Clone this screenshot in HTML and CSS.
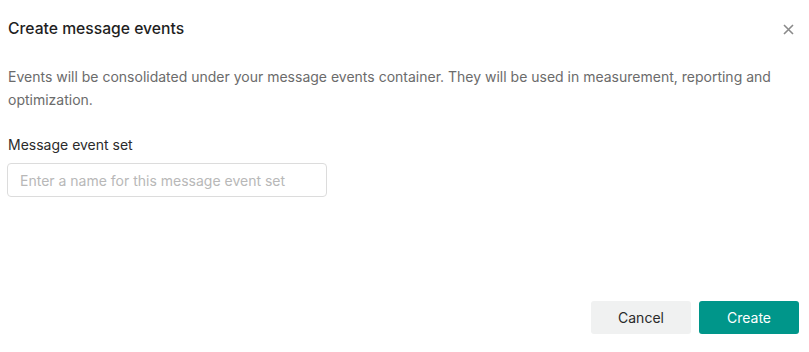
FILE: index.html
```html
<!DOCTYPE html>
<html>

<head>
    <meta charset="utf-8">
    <title>Create message events</title>
    <link rel="stylesheet" href="styles.css">
</head>

<body>
    <div class="dialog">
        <div class="dialog-header">
            <h2 class="dialog-title">Create message events</h2>
            <button class="close-btn" type="button" aria-label="Close">
                <svg width="11" height="11" viewBox="0 0 11 11">
                    <path d="M1 1 L10 10 M10 1 L1 10" stroke="#8a8a8a" stroke-width="1.6" fill="none"/>
                </svg>
            </button>
        </div>
        <p class="dialog-desc">Events will be consolidated under your message events container. They will be used in measurement, reporting and optimization.</p>
        <label class="field-label" for="setname">Message event set</label>
        <input class="field-input" id="setname" type="text" placeholder="Enter a name for this message event set">
        <div class="dialog-footer">
            <button class="btn btn-cancel" type="button">Cancel</button>
            <button class="btn btn-create" type="button">Create</button>
        </div>
    </div>
</body>

</html>
```

FILE: styles.css
```css
body {
    margin: 0;
    background: #fff;
    font-family: Inter, "Liberation Sans", sans-serif;
    color: #222;
}

.dialog {
    height: 352px;
    box-sizing: border-box;
    padding: 16px 10px 18px 7px;
    display: flex;
    flex-direction: column;
}

.dialog-header {
    display: flex;
    justify-content: space-between;
    align-items: center;
    padding-left: 1px;
}

.dialog-title {
    margin: 0;
    font-size: 15.7px;
    font-weight: 500;
    line-height: 26px;
    color: #1f1f1f;
}

.close-btn {
    border: none;
    background: none;
    padding: 0;
    margin-right: 5px;
    width: 11px;
    height: 11px;
    display: flex;
}

.dialog-desc {
    margin: 23px 0 0 1px;
    font-size: 14px;
    line-height: 23px;
    color: #6b6b6b;
}

.field-label {
    margin: 24px 0 0 1px;
    font-size: 14px;
    line-height: 20px;
    color: #2b2b2b;
}

.field-input {
    margin-top: 8px;
    width: 320px;
    height: 34px;
    box-sizing: border-box;
    border: 1px solid #dcdcdc;
    border-radius: 4px;
    padding: 0 12px;
    font-family: inherit;
    font-size: 14px;
    color: #222;
    outline: none;
}

.field-input::placeholder {
    color: #b8b8b8;
}

.dialog-footer {
    margin-top: auto;
    display: flex;
    justify-content: flex-end;
    gap: 8px;
}

.btn {
    width: 100px;
    height: 33px;
    border: none;
    border-radius: 3px;
    font-family: inherit;
    font-size: 14px;
}

.btn-cancel {
    background: #f0f1f1;
    color: #2a2a2a;
}

.btn-create {
    background: #00968a;
    color: #fff;
}
```
